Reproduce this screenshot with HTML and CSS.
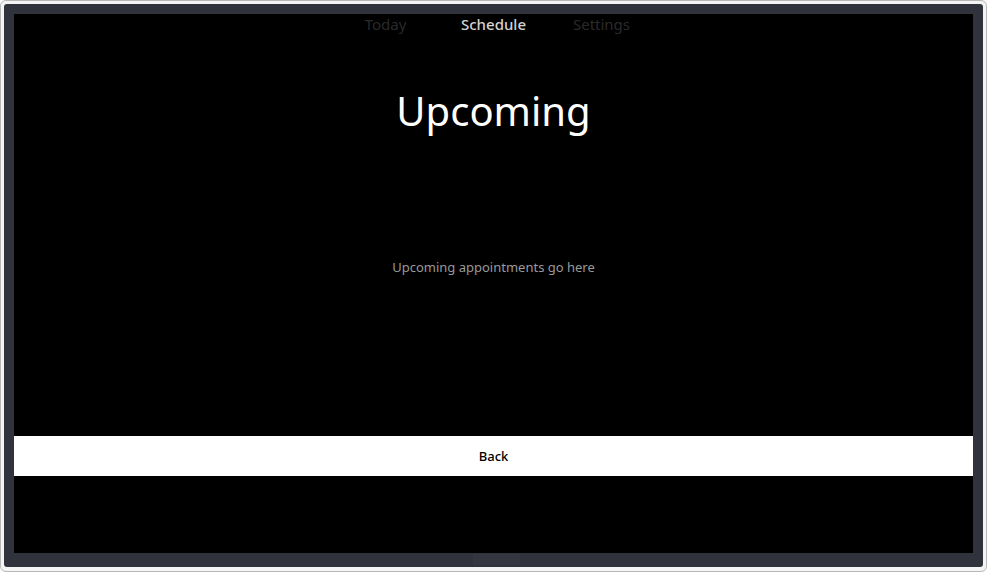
FILE: index.html
```html
<!DOCTYPE html>
<html lang="en">
<head>
    <meta charset="UTF-8">
    <title>Schedule</title>
    <link rel="stylesheet" href="styles.css">
</head>
<body>

<div class="device">
    <div class="bezel">
        <div class="screen">
            <nav class="tabs">
                <span class="tab">Today</span>
                <span class="tab active">Schedule</span>
                <span class="tab">Settings</span>
            </nav>
            <h1 class="page-title">Upcoming</h1>
            <p class="placeholder">Upcoming appointments go here</p>
            <div class="spacer"></div>
            <button class="back-button">Back</button>
            <div class="bottom-space"></div>
        </div>
        <div class="home-bar"></div>
    </div>
</div>

</body>
</html>
```

FILE: styles.css
```css
html, body {
    margin: 0;
    padding: 0;
}

body {
    font-family: "Noto Sans", "Open Sans", sans-serif;
    background-color: #fafafa;
    width: 987px;
    height: 572px;
    overflow: hidden;
}

.device {
    box-sizing: border-box;
    width: 987px;
    height: 572px;
    border: 1px solid #b8b8b8;
    border-radius: 6px;
    background-color: #f4f4f4;
    padding: 3px 3px 4px 3px;
}

.bezel {
    position: relative;
    box-sizing: border-box;
    height: 100%;
    background-color: #30333c;
    border-radius: 3px;
    padding: 10px 10px 14px 10px;
}

.screen {
    display: flex;
    flex-direction: column;
    align-items: center;
    height: 100%;
    background-color: #000;
}

.tabs {
    display: flex;
    justify-content: center;
    height: 20px;
}

.tab {
    width: 108px;
    text-align: center;
    font-size: 15px;
    line-height: 20px;
    color: #2a2a2a;
}

.tab.active {
    color: #d2d2d2;
    font-weight: 500;
}

.page-title {
    margin: 50px 0 0 0;
    font-size: 40px;
    font-weight: normal;
    line-height: 53px;
    color: #fff;
}

.placeholder {
    margin: 121px 0 0 0;
    font-size: 13px;
    line-height: 18px;
    color: #9a9a9a;
}

.spacer {
    flex: 1;
}

.back-button {
    width: 100%;
    height: 40px;
    border: none;
    background-color: #fff;
    color: #000;
    font-family: inherit;
    font-size: 13px;
    font-weight: 500;
    padding: 0;
}

.bottom-space {
    height: 77px;
}

.home-bar {
    position: absolute;
    left: 469px;
    bottom: 2px;
    width: 47px;
    height: 11px;
    background-color: #34373f;
}
```
